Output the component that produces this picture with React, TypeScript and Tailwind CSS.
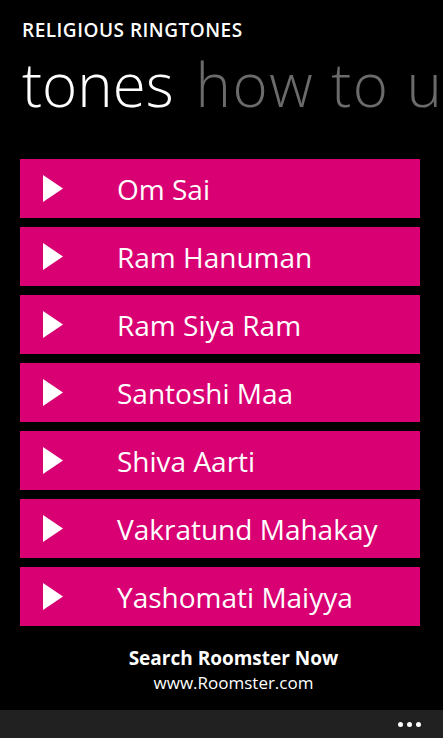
import React from "react";

const tones = [
  "Om Sai",
  "Ram Hanuman",
  "Ram Siya Ram",
  "Santoshi Maa",
  "Shiva Aarti",
  "Vakratund Mahakay",
  "Yashomati Maiyya",
];

export default function App() {
  return (
    <div
      className="w-[443px] h-[738px] bg-black flex flex-col overflow-hidden text-white"
      style={{ fontFamily: '"Open Sans", "Noto Sans", sans-serif' }}
    >
      <div className="pl-[22px] pt-[18px] text-[19px] font-semibold leading-[24px] tracking-[0.5px]">
        RELIGIOUS RINGTONES
      </div>
      <div className="pl-[22px] mt-[7px] whitespace-nowrap text-[60px] font-light leading-[70px]">
        <span className="text-white">tones</span>
        <span className="text-[#6b6b6b] ml-[22px] tracking-[1.5px]">how to use</span>
      </div>
      <div className="mt-[40px] pl-[20px] flex flex-col gap-[9px]">
        {tones.map((t) => (
          <div key={t} className="h-[59px] w-[400px] bg-[#d80073] flex items-center">
            <svg width="20" height="27" viewBox="0 0 20 27" className="ml-[23px] shrink-0">
              <polygon points="0,0 20,13.5 0,27" fill="#ffffff" />
            </svg>
            <span className="ml-[54px] text-[28px] leading-none text-white">{t}</span>
          </div>
        ))}
      </div>
      <div className="mt-[19px] pl-[24px] flex flex-col items-center">
        <div className="text-[19px] font-bold leading-[26px]">Search Roomster Now</div>
        <div className="text-[17px] leading-[24px]">www.Roomster.com</div>
      </div>
      <div className="flex-1" />
      <div className="h-[28px] bg-[#212121] flex justify-end items-center pr-[22px] gap-[4px]">
        <span className="w-[5px] h-[5px] rounded-full bg-white" />
        <span className="w-[5px] h-[5px] rounded-full bg-white" />
        <span className="w-[5px] h-[5px] rounded-full bg-white" />
      </div>
    </div>
  );
}
